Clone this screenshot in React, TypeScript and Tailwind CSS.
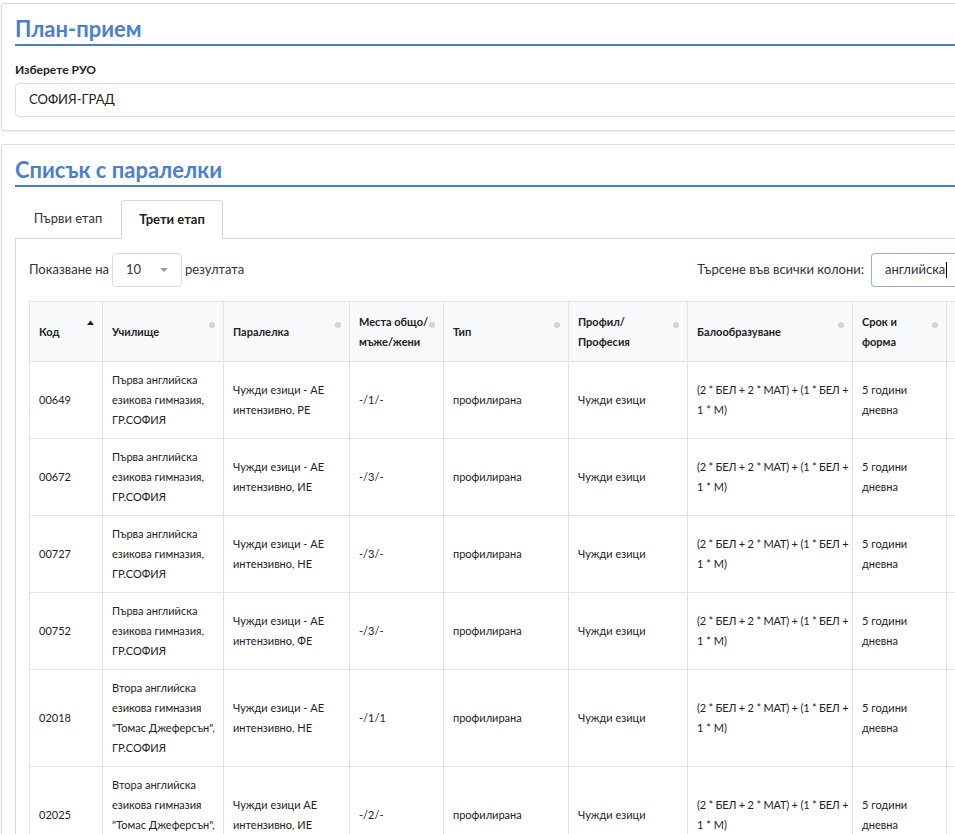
import React from 'react'

const font = { fontFamily: 'Lato, "Noto Sans", sans-serif' }

const school1 = 'Първа английска езикова гимназия, ГР.СОФИЯ'
const school2 = 'Втора английска езикова гимназия "Томас Джеферсън", ГР.СОФИЯ'

const rows = [
  { code: '00649', school: school1, cls: 'Чужди езици - АЕ интензивно, РЕ', seats: '-/1/-' },
  { code: '00672', school: school1, cls: 'Чужди езици - АЕ интензивно, ИЕ', seats: '-/3/-' },
  { code: '00727', school: school1, cls: 'Чужди езици - АЕ интензивно, НЕ', seats: '-/3/-' },
  { code: '00752', school: school1, cls: 'Чужди езици - АЕ интензивно, ФЕ', seats: '-/3/-' },
  { code: '02018', school: school2, cls: 'Чужди езици - АЕ интензивно, НЕ', seats: '-/1/1' },
  { code: '02025', school: school2, cls: 'Чужди езици АЕ интензивно, ИЕ', seats: '-/2/-' },
]

const columns = [
  { title: ['Код'], w: 'w-[73px]', sorted: true },
  { title: ['Училище'], w: 'w-[121px]' },
  { title: ['Паралелка'], w: 'w-[126px]' },
  { title: ['Места общо/', 'мъже/жени'], w: 'w-[94px]' },
  { title: ['Тип'], w: 'w-[125px]' },
  { title: ['Профил/', 'Професия'], w: 'w-[119px]' },
  { title: ['Балообразуване'], w: 'w-[165px]' },
  { title: ['Срок и', 'форма'], w: 'w-[94px]' },
  { title: [], w: 'w-[120px]' },
]

function SortIcon({ active }: { active?: boolean }) {
  if (active) {
    return (
      <svg className="absolute right-[8px] top-[18px]" width="7" height="5" viewBox="0 0 7 5">
        <path d="M0 5 L3.5 0.5 L7 5 Z" fill="#222" />
      </svg>
    )
  }
  return <span className="absolute right-[8px] top-[20px] h-[6px] w-[6px] rounded-full bg-[#d4d4d4]" />
}

function Card({ title, children }: { title: string; children: React.ReactNode }) {
  return (
    <div className="rounded-[3px] border border-[#dcdcdc] bg-white px-[13px] pt-[12px] shadow-[0_1px_2px_rgba(0,0,0,0.08)]">
      <h2 className="border-b-2 border-[#4a7fcf] pb-[2px] text-[22px] font-bold leading-[26px] text-[#4a7fcf]">
        {title}
      </h2>
      {children}
    </div>
  )
}

const td = 'border border-[#e3e3e3] pl-[9px] pr-[3px] py-[8px] align-middle'

export default function App() {
  return (
    <div className="h-[834px] w-[955px] overflow-hidden bg-white text-[#222]" style={font}>
      <div className="w-[1240px] pl-[1px] pt-[3px]">
        <Card title="План-прием">
          <div className="pb-[13px]">
            <p className="mt-[15px] mb-[4px] text-[12px] font-bold leading-[18px]">Изберете РУО</p>
            <div className="flex h-[34px] items-center rounded-[4px] border border-[#dcdcdc] px-[13px] text-[13px]">
              СОФИЯ-ГРАД
            </div>
          </div>
        </Card>

        <div className="mt-[13px]">
          <Card title="Списък с паралелки">
            <div className="mt-[13px] flex text-[13px]">
              <div className="flex h-[39px] w-[106px] items-center justify-center border-b border-[#d8d8d8] text-[#333]">
                Първи етап
              </div>
              <div className="flex h-[39px] w-[102px] items-center justify-center rounded-t-[4px] border border-b-0 border-[#d8d8d8] font-bold">
                Трети етап
              </div>
              <div className="flex-1 border-b border-[#d8d8d8]" />
            </div>
            <div className="border-l border-[#d8d8d8] pl-[13px] pt-[14px]">
              <div className="flex w-[926px] items-center justify-between text-[13px] text-[#333]">
                <div className="flex items-center">
                  <span>Показване на</span>
                  <div className="mx-[3px] flex h-[34px] w-[70px] items-center justify-between rounded-[4px] border border-[#dcdcdc] pl-[13px] pr-[13px]">
                    <span>10</span>
                    <svg width="8" height="4" viewBox="0 0 8 4">
                      <path d="M0 0 L8 0 L4 4 Z" fill="#999" />
                    </svg>
                  </div>
                  <span>резултата</span>
                </div>
                <div className="flex items-center">
                  <span>Търсене във всички колони:</span>
                  <div className="ml-[7px] flex h-[34px] w-[84px] items-center rounded-l-[4px] border border-r-0 border-[#8fb0e0] pl-[13px]">
                    <span>английска</span>
                    <span className="ml-[1px] h-[16px] w-[1px] bg-black" />
                  </div>
                </div>
              </div>

              <table className="mt-[14px] w-[1037px] table-fixed border-collapse text-[11px] leading-[20px] text-[#222]">
                <thead>
                  <tr className="bg-[#f8f9fa]">
                    {columns.map((c, i) => (
                      <th
                        key={i}
                        className={`${c.w} relative h-[60px] border border-[#e3e3e3] pl-[9px] pr-[12px] text-left align-middle font-bold`}
                      >
                        {c.title.map((line) => (
                          <div key={line} className="whitespace-nowrap">{line}</div>
                        ))}
                        {c.title.length > 0 && <SortIcon active={c.sorted} />}
                      </th>
                    ))}
                  </tr>
                </thead>
                <tbody>
                  {rows.map((r) => (
                    <tr key={r.code}>
                      <td className={td}>{r.code}</td>
                      <td className={td}>{r.school}</td>
                      <td className={td}>{r.cls}</td>
                      <td className={td}>{r.seats}</td>
                      <td className={td}>профилирана</td>
                      <td className={td}>Чужди езици</td>
                      <td className={td}>
                        <span className="whitespace-nowrap tracking-[-0.2px]">(2 * БЕЛ + 2 * МАТ) + (1 * БЕЛ +</span>
                        <br />
                        1 * М)
                      </td>
                      <td className={td}>5 години дневна</td>
                      <td className={td} />
                    </tr>
                  ))}
                </tbody>
              </table>
            </div>
          </Card>
        </div>
      </div>
    </div>
  )
}
